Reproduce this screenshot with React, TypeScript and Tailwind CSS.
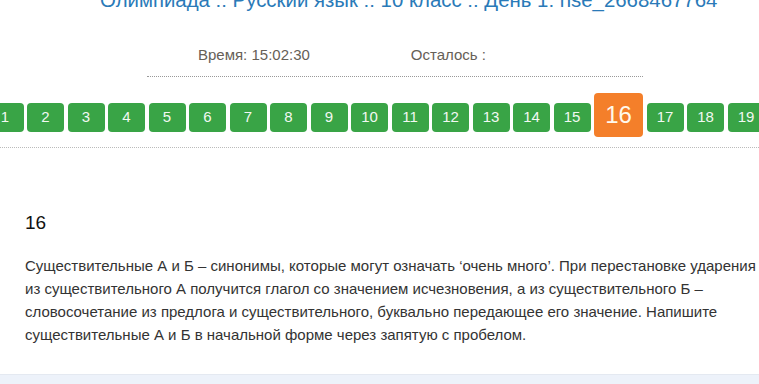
const nums = Array.from({ length: 19 }, (_, i) => i + 1);

const lines = [
  "Существительные А и Б – синонимы, которые могут означать ‘очень много’. При перестановке ударения",
  "из существительного А получится глагол со значением исчезновения, а из существительного Б –",
  "словосочетание из предлога и существительного, буквально передающее его значение. Напишите",
  "существительные А и Б в начальной форме через запятую с пробелом.",
];

export default function App() {
  return (
    <div className="w-[759px] h-[384px] overflow-hidden bg-white font-['Liberation_Sans',Arial,sans-serif] flex flex-col">
      <div className="h-[10px] relative">
        <h1 className="absolute left-[100px] -top-[12px] text-[20.4px] leading-[24px] text-[#2a7ab8] whitespace-nowrap">
          Олимпиада :: Русский язык :: 10 класс :: День 1: hse_2668467764
        </h1>
      </div>

      <div className="mt-[36px] flex text-[15px] text-[#666057] leading-[18px]">
        <span className="ml-[198px]">Время: 15:02:30</span>
        <span className="ml-[101px]">Осталось :</span>
      </div>
      <div className="mt-[12px] ml-[147px] w-[496px] border-t border-dotted border-[#999]" />

      <div className="mt-[16px] h-[44px] flex items-start gap-[3.5px] -ml-[13.5px] whitespace-nowrap">
        {nums.map((n) =>
          n === 16 ? (
            <div
              key={n}
              className="shrink-0 w-[49px] h-[44px] rounded-[4px] bg-[#f47f2a] text-[#fff9ec] text-[24px] flex items-center justify-center"
            >
              {n}
            </div>
          ) : (
            <div
              key={n}
              className="shrink-0 mt-[10px] w-[37px] h-[29px] rounded-[4px] bg-[#39a446] text-[#f2f8f2] text-[15px] flex items-center justify-center"
            >
              {n}
            </div>
          )
        )}
      </div>
      <div className="mt-[10px] border-t border-dotted border-[#bbb]" />

      <div className="pl-[25px] mt-[64px]">
        <div className="text-[19px] leading-[22px] text-[#111]">16</div>
        <p className="mt-[20px] text-[15px] leading-[23px] text-[#333] whitespace-nowrap">
          {lines.map((l) => (
            <span key={l} className="block">
              {l}
            </span>
          ))}
        </p>
      </div>

      <div className="mt-auto h-[10px] bg-[#edf2fa] border-t border-[#e4e9f1]" />
    </div>
  );
}
